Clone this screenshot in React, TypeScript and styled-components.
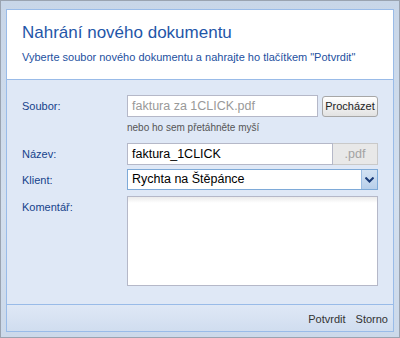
import React from "react";
import styled, { createGlobalStyle } from "styled-components";

const Global = createGlobalStyle`
  html, body { margin: 0; padding: 0; background: #ffffff; }
  * { box-sizing: border-box; }
`;

const Window = styled.div`
  width: 400px;
  height: 338px;
  border: 1px solid #9aa3b0;
  background: linear-gradient(#c8d6e8, #d3dfee 60%, #ccd9ea);
  padding: 8px 5px 5px 5px;
  font-family: "Liberation Sans", Arial, sans-serif;
`;

const Panel = styled.div`
  height: 100%;
  border: 1px solid #99bbe8;
  display: flex;
  flex-direction: column;
  background: #dfe8f6;
`;

const Header = styled.div`
  height: 70px;
  flex: none;
  background: #ffffff;
  border-bottom: 1px solid #99bbe8;
  padding: 13px 15px 0 15px;
`;

const Title = styled.div`
  font-size: 17px;
  line-height: 20px;
  color: #1f56a8;
`;

const Subtitle = styled.div`
  margin-top: 7px;
  font-size: 11px;
  line-height: 14px;
  color: #2350a0;
`;

const Body = styled.div`
  flex: 1;
  padding: 15px 15px 0 15px;
  display: flex;
  flex-direction: column;
`;

const Row = styled.div<{ $mt?: number }>`
  display: flex;
  align-items: flex-start;
  margin-top: ${(p) => p.$mt ?? 0}px;
`;

const Label = styled.div`
  width: 105px;
  flex: none;
  font-size: 11px;
  line-height: 22px;
  color: #15428b;
`;

const Control = styled.div`
  flex: 1;
  display: flex;
  flex-direction: column;
`;

const Line = styled.div`
  display: flex;
  align-items: flex-start;
`;

const TextBox = styled.div<{ $muted?: boolean; $h?: number }>`
  flex: 1;
  height: ${(p) => p.$h ?? 22}px;
  border: 1px solid #b5b8c8;
  background: #ffffff;
  padding: 0 4px;
  font-size: 12.5px;
  line-height: ${(p) => (p.$h ?? 22) - 2}px;
  color: ${(p) => (p.$muted ? "#999999" : "#000000")};
  white-space: nowrap;
  overflow: hidden;
`;

const Browse = styled.div`
  flex: none;
  margin-left: 4px;
  width: 56px;
  height: 21px;
  margin-top: 1px;
  border: 1px solid #a7a7a7;
  border-radius: 3px;
  background: linear-gradient(#ffffff, #f1f1f1 50%, #e2e2e2);
  font-size: 11px;
  line-height: 19px;
  text-align: center;
  color: #222;
`;

const Hint = styled.div`
  margin-top: 4px;
  font-size: 10px;
  line-height: 14px;
  color: #555555;
`;

const Addon = styled.div`
  flex: none;
  width: 45px;
  height: 22px;
  border: 1px solid #c9c9c9;
  border-left: none;
  background: #e8e8e8;
  font-size: 12.5px;
  line-height: 20px;
  text-align: center;
  color: #a3a3a3;
`;

const Select = styled.div`
  height: 21px;
  border: 1px solid #7eaad8;
  background: #ffffff;
  display: flex;
`;

const SelectText = styled.div`
  flex: 1;
  padding: 0 4px;
  font-size: 12.5px;
  line-height: 19px;
  color: #000;
  white-space: nowrap;
`;

const Arrow = styled.div`
  width: 16px;
  border-left: 1px solid #9cbde3;
  background: linear-gradient(#d3e2f3, #b8cfea);
  display: flex;
  align-items: center;
  justify-content: center;
`;

const TextArea = styled.div`
  height: 90px;
  border: 1px solid #b5b8c8;
  background: linear-gradient(#ebebeb, #ffffff 6px, #ffffff);
`;

const Footer = styled.div`
  height: 27px;
  flex: none;
  border-top: 1px solid #99bbe8;
  background: linear-gradient(#dfe8f6, #d0ddef);
  padding: 7px 5px 0 0;
  display: flex;
  justify-content: flex-end;
  gap: 10px;
`;

const FootButton = styled.div`
  font-size: 11px;
  line-height: 14px;
  color: #333333;
`;

export default function App() {
  return (
    <>
      <Global />
      <Window>
        <Panel>
          <Header>
            <Title>Nahrání nového dokumentu</Title>
            <Subtitle>Vyberte soubor nového dokumentu a nahrajte ho tlačítkem "Potvrdit"</Subtitle>
          </Header>
          <Body>
            <Row>
              <Label>Soubor:</Label>
              <Control>
                <Line>
                  <TextBox $muted>faktura za 1CLICK.pdf</TextBox>
                  <Browse>Procházet</Browse>
                </Line>
                <Hint>nebo ho sem přetáhněte myší</Hint>
              </Control>
            </Row>
            <Row $mt={8}>
              <Label>Název:</Label>
              <Control>
                <Line>
                  <TextBox>faktura_1CLICK</TextBox>
                  <Addon>.pdf</Addon>
                </Line>
              </Control>
            </Row>
            <Row $mt={4}>
              <Label>Klient:</Label>
              <Control>
                <Select>
                  <SelectText>Rychta na Štěpánce</SelectText>
                  <Arrow>
                    <svg width="9" height="6" viewBox="0 0 9 6">
                      <path d="M0.5 0.5 L4.5 4.5 L8.5 0.5" fill="none" stroke="#1a3b78" strokeWidth="2" />
                    </svg>
                  </Arrow>
                </Select>
              </Control>
            </Row>
            <Row $mt={5}>
              <Label>Komentář:</Label>
              <Control>
                <TextArea />
              </Control>
            </Row>
          </Body>
          <Footer>
            <FootButton>Potvrdit</FootButton>
            <FootButton>Storno</FootButton>
          </Footer>
        </Panel>
      </Window>
    </>
  );
}
